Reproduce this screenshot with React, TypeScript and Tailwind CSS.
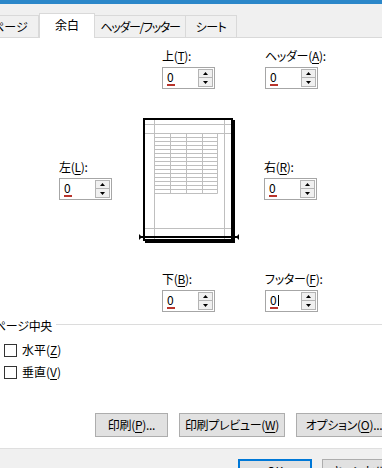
import React from 'react';

type FieldProps = {
	name: string;
	accel: string;
	cursor?: boolean;
	className?: string;
};

const Triangle: React.FC<{ up?: boolean }> = ({ up }) => (
	<svg width="5" height="3" viewBox="0 0 5 3">
		<polygon points={up ? '0,3 2.5,0 5,3' : '0,0 2.5,3 5,0'} fill="#000" />
	</svg>
);

const SpinBox: React.FC<{ cursor?: boolean }> = ({ cursor }) => (
	<div className="mt-[3px] flex h-[22px] w-[53px] border border-[#a6a6a6] bg-white">
		<div className="flex flex-1 items-start pl-[4px] pt-[3px]">
			<div className="flex flex-col items-start">
				<span className="text-[12px] leading-[12px]">0</span>
				<span className="mt-[1px] h-[2px] w-[8px] bg-[#b8342c]" />
			</div>
			{cursor && <span className="mt-[1px] h-[11px] w-px bg-black" />}
		</div>
		<div className="my-[1px] mr-[1px] flex w-[15px] flex-col">
			<div className="flex h-[9px] items-center justify-center border border-[#b4b4b4] bg-[#f0f0f0]">
				<Triangle up />
			</div>
			<div className="flex h-[9px] items-center justify-center border border-t-0 border-[#b4b4b4] bg-[#f0f0f0]">
				<Triangle />
			</div>
		</div>
	</div>
);

const Field: React.FC<FieldProps> = ({ name, accel, cursor, className = '' }) => (
	<div className={`flex shrink-0 flex-col ${className}`}>
		<div className="whitespace-nowrap text-[12px] leading-[16px] tracking-[-0.3px]">
			{name}(<span className="underline underline-offset-2">{accel}</span>):
		</div>
		<SpinBox cursor={cursor} />
	</div>
);

const PagePreview: React.FC = () => {
	const rows = Array.from({ length: 16 }, (_, i) => 15.5 + i * 4);
	const cols = [15.5, 31.5, 47.5, 63.5, 78.5];
	return (
		<svg width="101" height="126" viewBox="0 0 101 126" className="shrink-0">
			<rect x="6" y="2" width="90" height="123" fill="#000" />
			<rect x="5" y="1" width="88" height="121" fill="#fff" stroke="#000" strokeWidth="2" />
			<g stroke="#bfbfbf" strokeWidth="1">
				<line x1="15.5" y1="2" x2="15.5" y2="121" />
				<line x1="85.5" y1="2" x2="85.5" y2="121" />
				<line x1="6" y1="6.5" x2="92" y2="6.5" />
				<line x1="6" y1="15.5" x2="92" y2="15.5" />
				<line x1="6" y1="110.5" x2="92" y2="110.5" />
				{rows.map((y) => (
					<line key={y} x1="15.5" y1={y} x2="78.5" y2={y} />
				))}
				{cols.map((x) => (
					<line key={x} x1={x} y1="15.5" x2={x} y2="75.5" />
				))}
			</g>
			<rect x="2" y="118" width="96" height="2" fill="#000" />
			<polygon points="0,116 3,119 0,122" fill="#000" />
			<polygon points="100,116 97,119 100,122" fill="#000" />
		</svg>
	);
};

const CheckRow: React.FC<{ label: string; accel: string; className?: string }> = ({ label, accel, className = '' }) => (
	<div className={`ml-[4px] flex h-[16px] shrink-0 items-center ${className}`}>
		<span className="h-[13px] w-[13px] border border-[#333333] bg-white" />
		<span className="ml-[5px] whitespace-nowrap text-[12px] leading-[16px]">
			{label}(<span className="underline underline-offset-2">{accel}</span>)
		</span>
	</div>
);

const App: React.FC = () => {
	return (
		<div className="flex h-[468px] w-[382px] flex-col overflow-hidden bg-white font-['Noto_Sans_CJK_JP',sans-serif] text-black [font-feature-settings:'palt']">
			<div className="h-[4px] shrink-0 bg-[#2b87c9]" />

			{/* tabs */}
			<div className="flex h-[34px] shrink-0 items-end border-b border-[#d9d9d9] bg-[#f0f0f0] text-[12px] whitespace-nowrap">
				<div className="ml-[-19px] flex h-[22px] w-[58px] shrink-0 items-center justify-center border border-b-0 border-[#d9d9d9]">
					ページ
				</div>
				<div className="relative -mb-px flex h-[25px] w-[56px] shrink-0 items-center justify-center border border-b-0 border-[#d9d9d9] bg-white pb-[2px]">
					余白
				</div>
				<div className="flex h-[22px] w-[91px] shrink-0 items-center justify-center border border-l-0 border-b-0 border-[#d9d9d9] tracking-[-1.3px]">
					ヘッダー/フッター
				</div>
				<div className="flex h-[22px] w-[51px] shrink-0 items-center justify-center border border-l-0 border-b-0 border-[#d9d9d9] tracking-[-0.5px]">
					シート
				</div>
			</div>

			{/* margins */}
			<div className="flex shrink-0 pl-[162px] pt-[10px]">
				<Field name="上" accel="T" className="w-[103px]" />
				<Field name="ヘッダー" accel="A" />
			</div>

			<div className="mt-[29px] flex shrink-0 items-start pl-[59px]">
				<Field name="左" accel="L" className="mt-[41px] w-[80px]" />
				<PagePreview />
				<Field name="右" accel="R" className="ml-[24px] mt-[41px]" />
			</div>

			<div className="mt-[27px] flex shrink-0 pl-[162px]">
				<Field name="下" accel="B" className="w-[103px]" />
				<Field name="フッター" accel="F" cursor />
			</div>

			{/* centering */}
			<div className="mt-[6px] flex h-[16px] shrink-0 items-center">
				<span className="ml-[-6px] shrink-0 whitespace-nowrap text-[12px] leading-[16px] tracking-[-0.3px]">ページ中央</span>
				<span className="mb-[3px] ml-[4px] h-px flex-1 bg-[#dcdcdc]" />
			</div>
			<CheckRow label="水平" accel="Z" className="mt-[8px]" />
			<CheckRow label="垂直" accel="V" className="mt-[6px]" />

			{/* action buttons */}
			<div className="mt-[33px] flex shrink-0 gap-[11px] pl-[95px] text-[12px] whitespace-nowrap tracking-[-0.3px]">
				<button className="h-[24px] w-[73px] shrink-0 border border-[#adadad] bg-[#e1e1e1]">
					印刷(<span className="underline underline-offset-2">P</span>)...
				</button>
				<button className="h-[24px] w-[106px] shrink-0 border border-[#adadad] bg-[#e1e1e1]">
					印刷プレビュー(<span className="underline underline-offset-2">W</span>)
				</button>
				<button className="h-[24px] w-[96px] shrink-0 border border-[#adadad] bg-[#e1e1e1]">
					オプション(<span className="underline underline-offset-2">O</span>)...
				</button>
			</div>

			{/* footer */}
			<div className="mt-[11px] flex h-[20px] shrink-0 items-start gap-[10px] overflow-hidden border-t border-[#dfdfdf] bg-[#f0f0f0] pl-[238px] pt-[10px] text-[12px] whitespace-nowrap">
				<button className="h-[23px] w-[74px] shrink-0 border-2 border-[#0078d7] bg-[#e1e1e1]">OK</button>
				<button className="h-[23px] w-[74px] shrink-0 border border-[#adadad] bg-[#e1e1e1]">キャンセル</button>
			</div>
		</div>
	);
};

export default App;
